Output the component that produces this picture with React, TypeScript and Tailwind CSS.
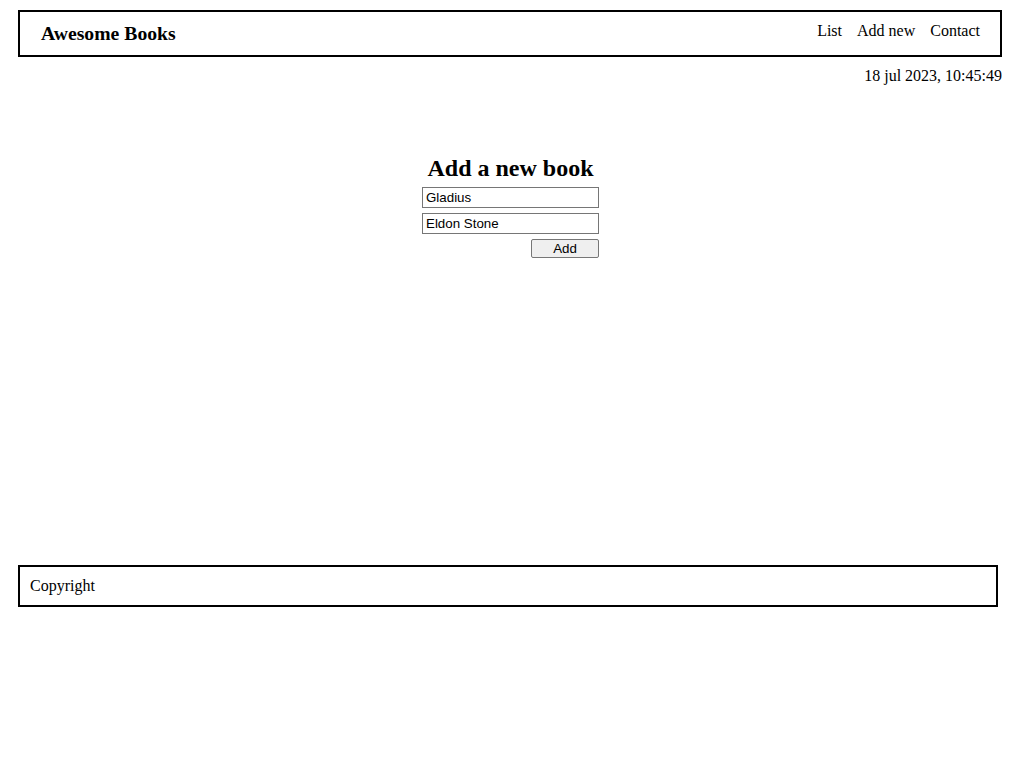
export default function App() {
  return (
    <div className="min-h-[775px] bg-white pt-[10px] font-['Liberation_Serif',serif] text-black">
      <header className="mx-[18px] flex h-[47px] w-[984px] items-center justify-between border-2 border-black pl-[21px] pr-[20px]">
        <h1 className="text-[19.7px] font-bold leading-none">Awesome Books</h1>
        <nav className="-mt-[5px] flex gap-[15px] text-[16px] leading-none">
          <a href="#">List</a>
          <a href="#">Add new</a>
          <a href="#">Contact</a>
        </nav>
      </header>

      <p className="mt-[10px] w-[1002px] text-right text-[16px] leading-[18px]">18 jul 2023, 10:45:49</p>

      <section className="mt-[69px] flex flex-col items-center">
        <h2 className="text-[24px] font-bold leading-[28px]">Add a new book</h2>
        <form className="mt-[5px] flex w-[177px] flex-col gap-[5px] font-['Liberation_Sans',sans-serif] text-[13.33px]">
          <input
            type="text"
            defaultValue="Gladius"
            className="h-[21px] w-full border border-[#767676] px-[3px] text-black outline-none"
          />
          <input
            type="text"
            defaultValue="Eldon Stone"
            className="h-[21px] w-full border border-[#767676] px-[3px] text-black outline-none"
          />
          <button
            type="button"
            className="h-[19px] w-[68px] self-end rounded-[2px] border border-[#767676] bg-[#efefef] leading-none"
          >
            Add
          </button>
        </form>
      </section>

      <footer className="mx-[18px] mt-[307px] flex h-[42px] w-[980px] items-center border-2 border-black pl-[10px] text-[16px]">
        Copyright
      </footer>
    </div>
  );
}
